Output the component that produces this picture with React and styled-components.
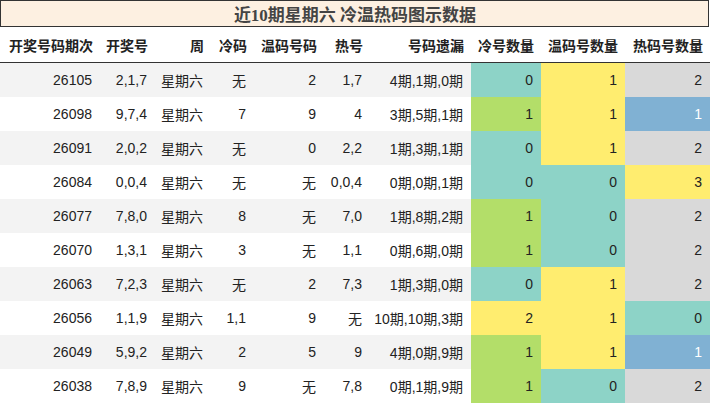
import React from "react";
import styled, { createGlobalStyle } from "styled-components";

const Global = createGlobalStyle`
  html, body { margin: 0; padding: 0; background: #fff; }
  body { font-family: "Liberation Sans", "Noto Sans CJK SC", sans-serif; }
`;

const Wrap = styled.div`
  width: 710px;
`;

const Title = styled.div`
  box-sizing: border-box;
  width: 709px;
  height: 27px;
  border: 1px solid #333;
  background: #fdf0e1;
  color: #444;
  font-family: "Liberation Serif", "Noto Sans CJK SC", serif;
  font-weight: bold;
  font-size: 17px;
  display: flex;
  align-items: center;
  justify-content: center;
  padding-left: 1px;
`;

const Table = styled.table`
  width: 710px;
  border-collapse: collapse;
  table-layout: fixed;
  font-size: 14px;
  color: #222;
`;

const HeadCell = styled.th`
  height: 35px;
  padding: 0 7px 0 0;
  text-align: right;
  font-weight: bold;
  white-space: nowrap;
  border-bottom: 1px solid #333;
  color: #222;
`;

const Row = styled.tr`
  background: ${(p) => (p.$alt ? "#f3f3f3" : "#fff")};
`;

const Cell = styled.td`
  height: 34px;
  padding: 0 8px 0 0;
  text-align: right;
  white-space: nowrap;
  background: ${(p) => p.$bg || "transparent"};
  color: ${(p) => (p.$light ? "#fff" : "#222")};
`;

const palette = {
  t: "#8dd3c7",
  y: "#ffed6f",
  g: "#d9d9d9",
  l: "#b3de69",
  b: "#80b1d3",
};

const widths = [100, 55, 56, 43, 70, 46, 101, 70, 84, 85];
const heads = ["开奖号码期次", "开奖号", "周", "冷码", "温码号码", "热号", "号码遗漏", "冷号数量", "温码号数量", "热码号数量"];

const rows = [
  ["26105", "2,1,7", "无", "2", "1,7", "4期,1期,0期", [0, "t"], [1, "y"], [2, "g"]],
  ["26098", "9,7,4", "7", "9", "4", "3期,5期,1期", [1, "l"], [1, "y"], [1, "b"]],
  ["26091", "2,0,2", "无", "0", "2,2", "1期,3期,1期", [0, "t"], [1, "y"], [2, "g"]],
  ["26084", "0,0,4", "无", "无", "0,0,4", "0期,0期,1期", [0, "t"], [0, "t"], [3, "y"]],
  ["26077", "7,8,0", "8", "无", "7,0", "1期,8期,2期", [1, "l"], [0, "t"], [2, "g"]],
  ["26070", "1,3,1", "3", "无", "1,1", "0期,6期,0期", [1, "l"], [0, "t"], [2, "g"]],
  ["26063", "7,2,3", "无", "2", "7,3", "1期,3期,0期", [0, "t"], [1, "y"], [2, "g"]],
  ["26056", "1,1,9", "1,1", "9", "无", "10期,10期,3期", [2, "y"], [1, "y"], [0, "t"]],
  ["26049", "5,9,2", "2", "5", "9", "4期,0期,9期", [1, "l"], [1, "y"], [1, "b"]],
  ["26038", "7,8,9", "9", "无", "7,8", "0期,1期,9期", [1, "l"], [0, "t"], [2, "g"]],
];

export default function App() {
  return (
    <Wrap>
      <Global />
      <Title>近10期星期六 冷温热码图示数据</Title>
      <Table>
        <colgroup>
          {widths.map((w, i) => (
            <col key={i} style={{ width: w }} />
          ))}
        </colgroup>
        <thead>
          <tr>
            {heads.map((h) => (
              <HeadCell key={h}>{h}</HeadCell>
            ))}
          </tr>
        </thead>
        <tbody>
          {rows.map((r, i) => (
            <Row key={r[0]} $alt={i % 2 === 0}>
              <Cell>{r[0]}</Cell>
              <Cell>{r[1]}</Cell>
              <Cell>星期六</Cell>
              <Cell>{r[2]}</Cell>
              <Cell>{r[3]}</Cell>
              <Cell>{r[4]}</Cell>
              <Cell>{r[5]}</Cell>
              {[r[6], r[7], r[8]].map(([v, c], j) => (
                <Cell key={j} $bg={palette[c]} $light={c === "b"}>
                  {v}
                </Cell>
              ))}
            </Row>
          ))}
        </tbody>
      </Table>
    </Wrap>
  );
}
